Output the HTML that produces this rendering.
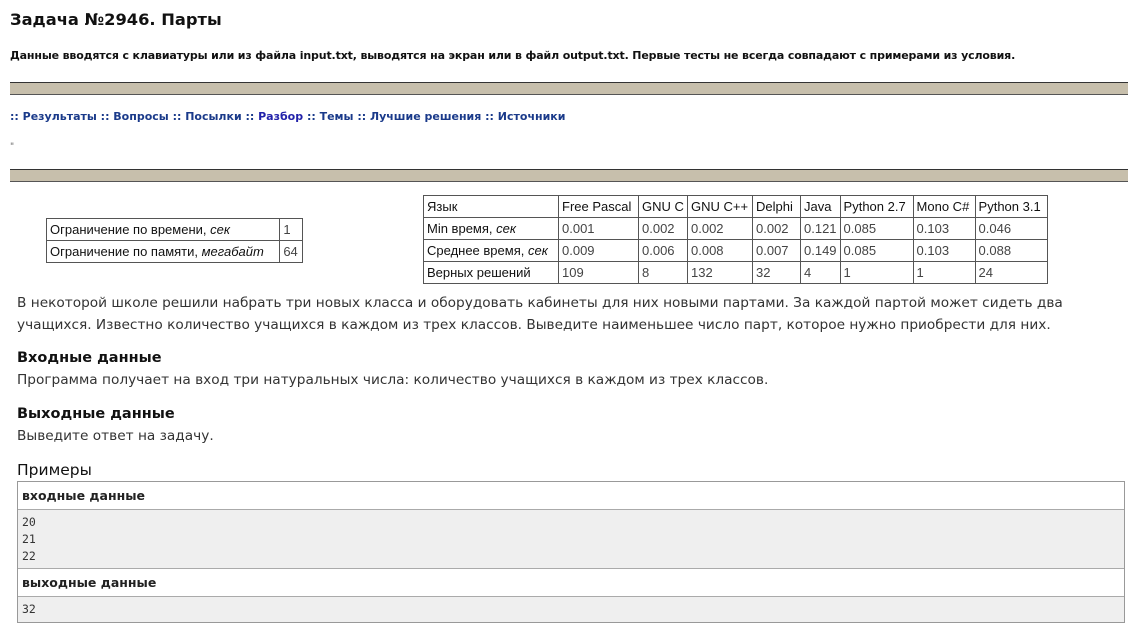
<!DOCTYPE html>
<html><head><meta charset="utf-8"><style>
body{margin:0;width:1128px;height:628px;overflow:hidden;background:#fff;font-family:"DejaVu Sans","Liberation Sans",sans-serif;color:#222;position:relative}
.a{position:absolute;white-space:nowrap}
.bar{position:absolute;left:10px;width:1130px;height:11px;background:#c7bfac;border-top:1px solid #333;border-bottom:1px solid #555}
table{position:absolute;border-collapse:collapse;font-family:"Liberation Sans",sans-serif;font-size:13px}
td{border:1px solid #555;padding:0 3px;height:21px;color:#444;white-space:nowrap}
td.h{color:#111}
.ex{position:absolute;left:17px;width:1106px;border:1px solid #999}
.ex div{border-bottom:1px solid #aaa;padding-left:4px}
.eh{background:#fff;font-weight:bold;font-size:12.5px;height:27px;line-height:27px}
.ev{background:#efefef;font-family:"DejaVu Sans Mono","Liberation Mono",monospace;font-size:11.5px;line-height:17px;color:#333}
</style></head><body>
<div class="a" style="left:10px;top:10px;font-size:16.3px;font-weight:bold;color:#111">Задача №2946. Парты</div>
<div class="a" style="left:10px;top:49px;font-size:11px;font-weight:bold;color:#111;letter-spacing:-0.15px">Данные вводятся с клавиатуры или из файла input.txt, выводятся на экран или в файл output.txt. Первые тесты не всегда совпадают с примерами из условия.</div>
<div class="bar" style="top:82px"></div>
<div class="a" style="left:10px;top:110px;font-size:11px;font-weight:bold;color:#1a3a8a">:: Результаты :: Вопросы :: Посылки :: <span style="color:#2222aa">Разбор</span> :: Темы :: Лучшие решения :: Источники</div>
<div class="a" style="left:10px;top:142px;font-size:9px;color:#666">"</div>
<div class="bar" style="top:169px"></div>
<table style="left:46px;top:218px;width:257px">
<tr><td class="h">Ограничение по времени, <i>сек</i></td><td>1</td></tr>
<tr><td class="h">Ограничение по памяти, <i>мегабайт</i></td><td>64</td></tr>
</table>
<table style="left:423px;top:195px;width:625px">
<tr><td class="h" style="width:128px">Язык</td><td class="h" style="width:73px">Free Pascal</td><td class="h" style="width:42px">GNU C</td><td class="h" style="width:58px">GNU C++</td><td class="h" style="width:41px">Delphi</td><td class="h" style="width:32px">Java</td><td class="h" style="width:66px">Python 2.7</td><td class="h" style="width:55px">Mono C#</td><td class="h">Python 3.1</td></tr>
<tr><td class="h">Min время, <i>сек</i></td><td>0.001</td><td>0.002</td><td>0.002</td><td>0.002</td><td>0.121</td><td>0.085</td><td>0.103</td><td>0.046</td></tr>
<tr><td class="h">Среднее время, <i>сек</i></td><td>0.009</td><td>0.006</td><td>0.008</td><td>0.007</td><td>0.149</td><td>0.085</td><td>0.103</td><td>0.088</td></tr>
<tr><td class="h">Верных решений</td><td>109</td><td>8</td><td>132</td><td>32</td><td>4</td><td>1</td><td>1</td><td>24</td></tr>
</table>
<div class="a" style="left:17px;top:292px;font-size:13.7px;line-height:22px;color:#333;white-space:normal;width:1100px">В некоторой школе решили набрать три новых класса и оборудовать кабинеты для них новыми партами. За каждой партой может сидеть два учащихся. Известно количество учащихся в каждом из трех классов. Выведите наименьшее число парт, которое нужно приобрести для них.</div>
<div class="a" style="left:17px;top:350px;font-size:14.5px;font-weight:bold;color:#111">Входные данные</div>
<div class="a" style="left:17px;top:372px;font-size:13.7px;color:#333">Программа получает на вход три натуральных числа: количество учащихся в каждом из трех классов.</div>
<div class="a" style="left:17px;top:406px;font-size:14.5px;font-weight:bold;color:#111">Выходные данные</div>
<div class="a" style="left:17px;top:428px;font-size:13.7px;color:#333">Выведите ответ на задачу.</div>
<div class="a" style="left:17px;top:461px;font-size:15.5px;color:#111">Примеры</div>
<div class="ex" style="top:481px">
<div class="eh">входные данные</div>
<div class="ev" style="height:50px;padding-top:4px;padding-bottom:4px">20<br>21<br>22</div>
<div class="eh">выходные данные</div>
<div class="ev" style="height:25px;line-height:25px;border-bottom:none">32</div>
</div>
</body></html>
